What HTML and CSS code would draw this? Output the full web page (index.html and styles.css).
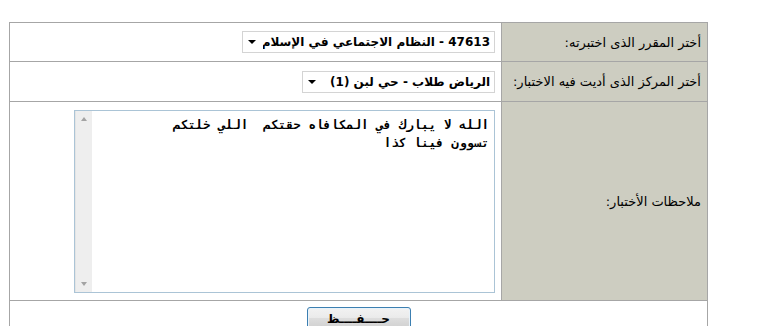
FILE: index.html
```html
<!DOCTYPE html>
<html lang="ar" dir="rtl">
<head>
    <meta charset="UTF-8">
    <title>ملاحظات الاختبار</title>
    <link rel="stylesheet" href="styles.css">
</head>
<body>
    <form class="exam-form">
        <table class="exam-table">
            <colgroup>
                <col class="label-col">
                <col class="field-col">
            </colgroup>
            <tr class="row-course">
                <td class="label-cell">أختر المقرر الذى اختبرته:</td>
                <td class="field-cell">
                    <span class="select-wrap course-select">
                        <select name="course">
                            <option>47613 - النظام الاجتماعي في الإسلام</option>
                        </select>
                    </span>
                </td>
            </tr>
            <tr class="row-center">
                <td class="label-cell">أختر المركز الذى أديت فيه الاختبار:</td>
                <td class="field-cell">
                    <span class="select-wrap center-select">
                        <select name="center">
                            <option>الرياض طلاب - حي لبن (1)</option>
                        </select>
                    </span>
                </td>
            </tr>
            <tr class="row-notes">
                <td class="label-cell">ملاحظات الأختبار:</td>
                <td class="field-cell">
                    <div class="notes-box">
                        <textarea name="notes" class="notes">الله لا يبارك في المكافاه حقتكم  اللي خلتكم
تسوون فينا كذا</textarea>
                        <div class="scrollbar">
                            <span class="arrow up"></span>
                            <span class="arrow down"></span>
                        </div>
                    </div>
                </td>
            </tr>
            <tr class="row-submit">
                <td colspan="2" class="submit-cell">
                    <button type="button" class="save-btn">حــــفــــظ</button>
                </td>
            </tr>
        </table>
    </form>
</body>
</html>
```

FILE: styles.css
```css
body {
    margin: 0;
    padding: 22px 0 0 9px;
    direction: ltr;
    background: #fff;
    font-family: "DejaVu Sans", Tahoma, sans-serif;
    font-size: 12px;
    color: #000;
}
.exam-table {
    direction: rtl;
    width: 699px;
    table-layout: fixed;
    border-collapse: collapse;
    border: 1px solid #a6a6a6;
}
.label-col {
    width: 206px;
}
.exam-table td {
    padding: 0;
    border: 1px solid #a6a6a6;
    vertical-align: middle;
}
.label-cell {
    background-color: #cdcdc1;
    padding: 0 6px 0 4px !important;
    text-align: right;
    white-space: nowrap;
    font-size: 13px;
}
.field-cell {
    padding: 0 6px 0 0 !important;
    text-align: right;
}
.row-course td {
    height: 38px;
}
.row-center td {
    height: 39px;
}
.row-notes td {
    height: 198px;
}
.row-submit td {
    height: 34px;
}
.select-wrap {
    position: relative;
    display: inline-block;
    vertical-align: middle;
}
.select-wrap::after {
    content: "";
    position: absolute;
    left: 6px;
    top: 9px;
    border-left: 4px solid transparent;
    border-right: 4px solid transparent;
    border-top: 4px solid #000;
    pointer-events: none;
}
.select-wrap select {
    -webkit-appearance: none;
    appearance: none;
    direction: rtl;
    height: 22px;
    padding: 0 4px 0 20px;
    border: 1px solid #d4d4d4;
    border-radius: 0;
    background: #fff;
    font-family: "DejaVu Sans", Tahoma, sans-serif;
    font-size: 12px;
    font-weight: bold;
    color: #000;
}
.course-select select {
    width: 253px;
}
.center-select select {
    width: 193px;
}
.notes-box {
    display: inline-flex;
    vertical-align: middle;
    box-sizing: border-box;
    width: 421px;
    height: 183px;
    border: 1px solid #abc4d6;
    background: #fff;
}
.notes {
    flex: 1;
    margin: 0;
    padding: 5px 5px;
    border: none;
    outline: none;
    resize: none;
    overflow: hidden;
    direction: rtl;
    font-family: "DejaVu Sans Mono", "Courier New", monospace;
    font-size: 12.5px;
    font-weight: bold;
    line-height: 18px;
    color: #000;
}
.scrollbar {
    display: flex;
    flex-direction: column;
    justify-content: space-between;
    align-items: center;
    width: 16px;
    padding: 6px 0;
    background: #eeeeee;
    border-left: 1px solid #e4e4e4;
}
.arrow {
    width: 0;
    height: 0;
    border-left: 3px solid transparent;
    border-right: 3px solid transparent;
}
.arrow.up {
    border-bottom: 4px solid #a3a3a3;
}
.arrow.down {
    border-top: 4px solid #a3a3a3;
}
.submit-cell {
    text-align: center;
    vertical-align: top !important;
    padding-top: 6px !important;
}
.save-btn {
    width: 104px;
    height: 23px;
    border: 1px solid #3c7fb1;
    border-radius: 3px;
    background: linear-gradient(#f2f2f2 0%, #ebebeb 45%, #dddddd 50%, #cfcfcf 100%);
    box-shadow: inset 0 0 0 1px #e8f3fb;
    font-family: "DejaVu Sans", Tahoma, sans-serif;
    font-size: 12px;
    font-weight: bold;
    color: #000;
    cursor: pointer;
}
```
